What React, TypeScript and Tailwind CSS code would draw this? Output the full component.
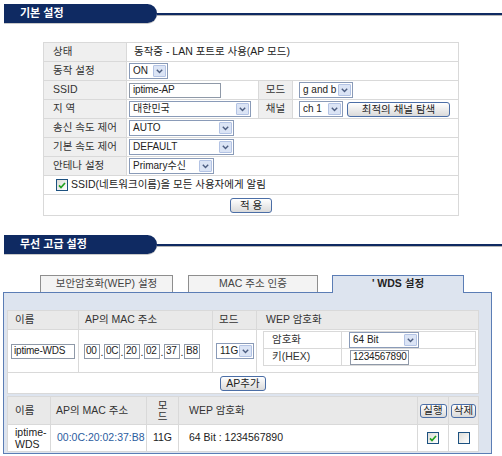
import React from "react";

const line = "border border-[#d9d9d9]";

function Sel({ value, className }: { value: string; className: string }) {
  return (
    <div className={`flex h-[16px] items-center border border-[#8a9bb8] bg-white text-[10px] ${className}`}>
      <span className="flex-1 overflow-hidden whitespace-nowrap pl-[3px] leading-[14px]">{value}</span>
      <span className="m-px flex h-[12px] w-[13px] shrink-0 items-center justify-center rounded-[1px] border border-[#b3c3e4] bg-[#dbe4f5]">
        <svg width="7" height="5" viewBox="0 0 7 5">
          <path d="M0.8 0.8 3.5 3.6 6.2 0.8" fill="none" stroke="#4c5d80" strokeWidth="1.4" />
        </svg>
      </span>
    </div>
  );
}

function Inp({ value, className }: { value: string; className: string }) {
  return (
    <div
      className={`flex h-[15px] items-center overflow-hidden whitespace-nowrap border border-[#8f99a8] bg-white text-[10px] leading-none tracking-[-0.2px] ${className}`}
    >
      {value}
    </div>
  );
}

function Btn({ children, className }: { children: React.ReactNode; className: string }) {
  return (
    <button
      type="button"
      className={`flex items-center justify-center whitespace-nowrap rounded-[3px] border border-[#4b6ea6] bg-linear-to-b from-white to-[#dadada] leading-none text-[#222] ${className}`}
    >
      {children}
    </button>
  );
}

function Check({ on }: { on?: boolean }) {
  return (
    <span className="flex h-[12px] w-[12px] items-center justify-center border border-[#1c5180] bg-linear-to-br from-[#dcdcd7] to-white">
      {on && (
        <svg width="8" height="7" viewBox="0 0 8 7">
          <path d="M1 3.4 3 5.5 7 1" fill="none" stroke="#21a121" strokeWidth="1.7" />
        </svg>
      )}
    </span>
  );
}

function SectionHead({ title }: { title: string }) {
  return (
    <div className="flex items-center pl-[4px]">
      <div className="flex h-[19px] w-[153px] items-center rounded-r-[10px] bg-[#0f2a62] pl-[16px] text-[11px] font-bold text-white shadow-[0_1px_0_#c9c9c9]">
        {title}
      </div>
      <div className="h-[2px] flex-1 bg-[#0f2a62] shadow-[0_1px_0_#b5b5b5]" />
    </div>
  );
}

function Label({ children }: { children: React.ReactNode }) {
  return <td className={`${line} bg-[#efefef] pl-[9px] whitespace-nowrap text-[#333]`}>{children}</td>;
}

export default function App() {
  return (
    <div className="h-[456px] w-[502px] overflow-hidden bg-white pt-[4px] font-['Liberation_Sans','Noto_Sans_CJK_KR',sans-serif] text-[10.5px] text-[#222]">
      <SectionHead title="기본 설정" />

      {/* basic settings */}
      <table className="ml-[43px] mt-[19px] w-[416px] table-fixed border-collapse">
        <colgroup>
          <col className="w-[83px]" />
          <col className="w-[132px]" />
          <col className="w-[34px]" />
          <col />
        </colgroup>
        <tbody>
          <tr className="h-[19px]">
            <Label>상태</Label>
            <td colSpan={3} className={`${line} pl-[7px]`}>동작중 - LAN 포트로 사용(AP 모드)</td>
          </tr>
          <tr className="h-[19px]">
            <Label>동작 설정</Label>
            <td colSpan={3} className={`${line} pl-[2px]`}>
              <Sel value="ON" className="w-[39px]" />
            </td>
          </tr>
          <tr className="h-[19px]">
            <Label>SSID</Label>
            <td className={`${line} pl-[2px]`}>
              <Inp value="iptime-AP" className="w-[92px] pl-[3px]" />
            </td>
            <td className={`${line} bg-[#efefef] text-center text-[#333]`}>모드</td>
            <td className={`${line} pl-[6px]`}>
              <Sel value="g and b" className="w-[54px]" />
            </td>
          </tr>
          <tr className="h-[19px]">
            <Label>지 역</Label>
            <td className={`${line} pl-[2px]`}>
              <Sel value="대한민국" className="w-[122px]" />
            </td>
            <td className={`${line} bg-[#efefef] text-center text-[#333]`}>채널</td>
            <td className={`${line} pl-[6px]`}>
              <div className="flex items-center gap-[4px]">
                <Sel value="ch 1" className="w-[44px]" />
                <Btn className="h-[15px] w-[103px]">최적의 채널 탐색</Btn>
              </div>
            </td>
          </tr>
          <tr className="h-[19px]">
            <Label>송신 속도 제어</Label>
            <td colSpan={3} className={`${line} pl-[2px]`}>
              <Sel value="AUTO" className="w-[105px]" />
            </td>
          </tr>
          <tr className="h-[19px]">
            <Label>기본 속도 제어</Label>
            <td colSpan={3} className={`${line} pl-[2px]`}>
              <Sel value="DEFAULT" className="w-[105px]" />
            </td>
          </tr>
          <tr className="h-[19px]">
            <Label>안테나 설정</Label>
            <td colSpan={3} className={`${line} pl-[2px]`}>
              <Sel value="Primary수신" className="w-[85px]" />
            </td>
          </tr>
          <tr className="h-[19px]">
            <td colSpan={4} className={`${line} pl-[12px]`}>
              <div className="flex items-center gap-[3px]">
                <Check on />
                <span>SSID(네트워크이름)을 모든 사용자에게 알림</span>
              </div>
            </td>
          </tr>
          <tr className="h-[21px]">
            <td colSpan={4} className={line}>
              <div className="flex justify-center">
                <Btn className="h-[15px] w-[42px]">적 용</Btn>
              </div>
            </td>
          </tr>
        </tbody>
      </table>

      <div className="mt-[19px]">
        <SectionHead title="무선 고급 설정" />
      </div>

      {/* tabs */}
      <div className="relative z-10 -mb-px mt-[21px] flex h-[18px] pl-[40px]">
        <div className="flex h-[17px] w-[133px] items-center justify-center border border-b-0 border-[#8e8e8e] bg-[#f3f3f3] text-[#444]">
          보안암호화(WEP) 설정
        </div>
        <div className="ml-[15px] flex h-[17px] w-[130px] items-center justify-center border border-b-0 border-[#8e8e8e] bg-[#f3f3f3] text-[#444]">
          MAC 주소 인증
        </div>
        <div className="ml-[14px] flex h-[18px] w-[132px] items-center justify-center border border-b-0 border-[#5b7db5] bg-[#dde4ef] pb-px font-bold text-[#222]">
          ' WDS 설정
        </div>
      </div>

      <div className="ml-[3px] w-[489px] border border-[#5b7db5] bg-[#dde4ef] pb-px pl-[3px] pt-[17px]">
        {/* add WDS */}
        <table className="w-[472px] table-fixed border-collapse bg-white">
          <colgroup>
            <col className="w-[71px]" />
            <col className="w-[134px]" />
            <col className="w-[44px]" />
            <col />
          </colgroup>
          <tbody>
            <tr className="h-[19px] bg-[#e9e9e9] text-[#333]">
              <td className={`${line} pl-[7px]`}>이름</td>
              <td className={`${line} pl-[6px]`}>AP의 MAC 주소</td>
              <td className={`${line} pl-[6px]`}>모드</td>
              <td className={`${line} pl-[9px]`}>WEP 암호화</td>
            </tr>
            <tr className="h-[43px]">
              <td className={`${line} pl-[3px]`}>
                <Inp value="iptime-WDS" className="w-[64px] pl-[2px]" />
              </td>
              <td className={`${line} pl-[5px]`}>
                <div className="flex items-end">
                  {["00", "0C", "20", "02", "37", "B8"].map((o, i) => (
                    <React.Fragment key={o}>
                      {i > 0 && <span className="w-[4px] text-center leading-[13px]">.</span>}
                      <Inp value={o} className="w-[16px] pl-px" />
                    </React.Fragment>
                  ))}
                </div>
              </td>
              <td className={`${line} pl-[3px]`}>
                <Sel value="11G" className="w-[38px]" />
              </td>
              <td className={`${line} pl-[6px] pr-[2px] pt-[1px] align-top`}>
                <table className="w-full table-fixed border-collapse">
                  <colgroup>
                    <col className="w-[78px]" />
                    <col />
                  </colgroup>
                  <tbody>
                    <tr className="h-[17px]">
                      <td className={`${line} pl-[8px] text-[#333]`}>암호화</td>
                      <td className={`${line} pl-[7px]`}>
                        <Sel value="64 Bit" className="w-[70px]" />
                      </td>
                    </tr>
                    <tr className="h-[17px]">
                      <td className={`${line} pl-[8px] text-[#333]`}>키(HEX)</td>
                      <td className={`${line} pl-[8px]`}>
                        <Inp value="1234567890" className="w-[59px] pl-[2px]" />
                      </td>
                    </tr>
                  </tbody>
                </table>
              </td>
            </tr>
            <tr className="h-[21px]">
              <td colSpan={4} className={line}>
                <div className="flex justify-center">
                  <Btn className="h-[15px] w-[46px]">AP추가</Btn>
                </div>
              </td>
            </tr>
          </tbody>
        </table>

        {/* WDS list */}
        <table className="mt-[2px] w-[472px] table-fixed border-collapse bg-white">
          <colgroup>
            <col className="w-[43px]" />
            <col className="w-[96px]" />
            <col className="w-[32px]" />
            <col />
            <col className="w-[31px]" />
            <col className="w-[30px]" />
          </colgroup>
          <tbody>
            <tr className="h-[28px] bg-[#e9e9e9] text-[#333]">
              <td className={`${line} pl-[7px]`}>이름</td>
              <td className={`${line} pl-[5px]`}>AP의 MAC 주소</td>
              <td className={`${line} text-center leading-[11px]`}>
                모<br />드
              </td>
              <td className={`${line} pl-[10px]`}>WEP 암호화</td>
              <td className={line}>
                <div className="flex justify-center">
                  <Btn className="h-[14px] w-[27px]">실행</Btn>
                </div>
              </td>
              <td className={line}>
                <div className="flex justify-center">
                  <Btn className="h-[14px] w-[25px]">삭제</Btn>
                </div>
              </td>
            </tr>
            <tr className="h-[27px]">
              <td className={`${line} pl-[7px] leading-[12px]`}>
                iptime-
                <br />
                WDS
              </td>
              <td className={`${line} pl-[6px] text-[#2b5c9e]`}>00:0C:20:02:37:B8</td>
              <td className={`${line} text-center`}>11G</td>
              <td className={`${line} pl-[10px]`}>64 Bit : 1234567890</td>
              <td className={line}>
                <div className="flex justify-center">
                  <Check on />
                </div>
              </td>
              <td className={line}>
                <div className="flex justify-center">
                  <Check />
                </div>
              </td>
            </tr>
          </tbody>
        </table>
      </div>
    </div>
  );
}
